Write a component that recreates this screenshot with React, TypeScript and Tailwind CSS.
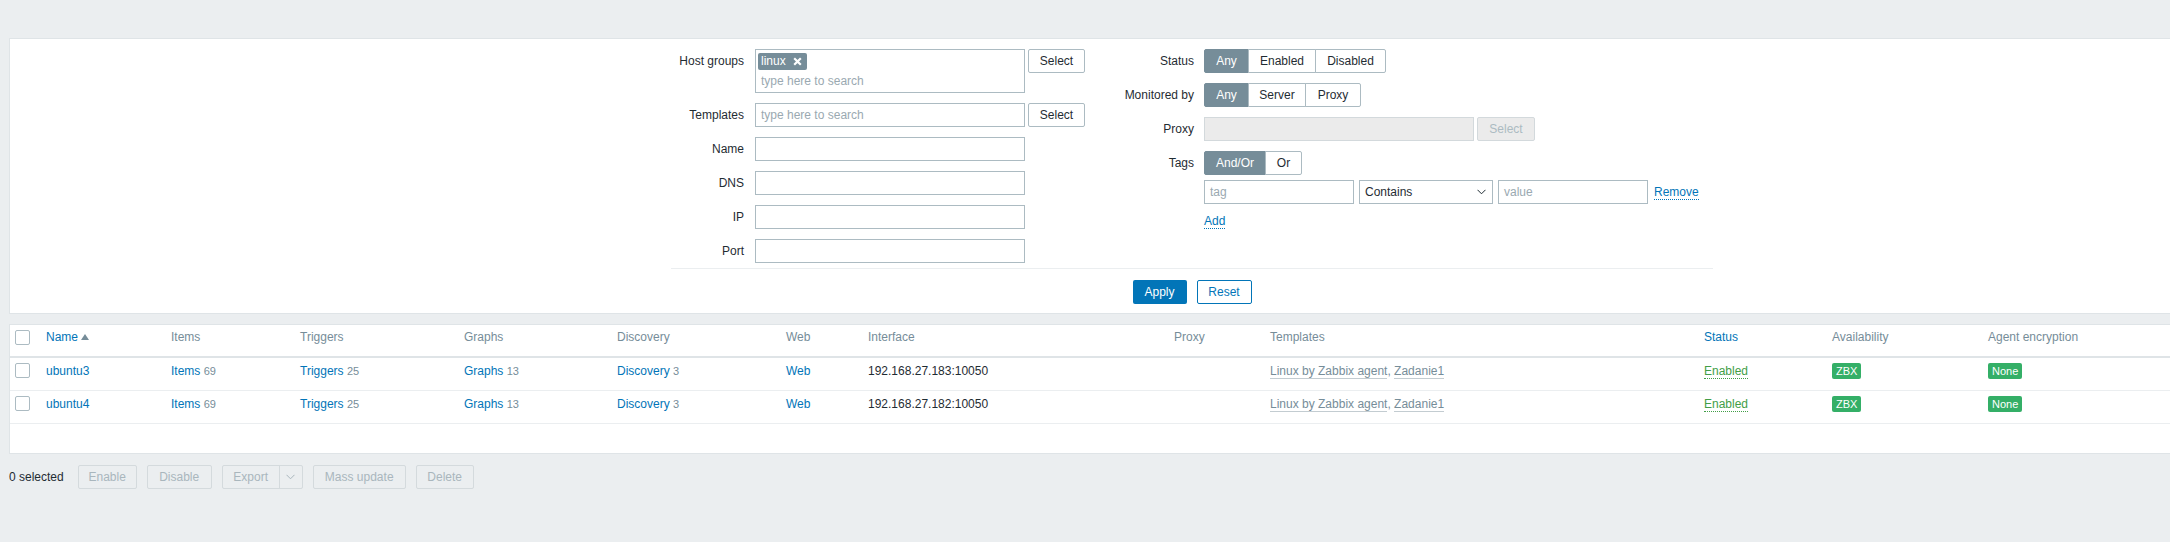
import React from "react";

function Chevron({ className = "" }: { className?: string }) {
  return (
    <svg width="9" height="6" viewBox="0 0 9 6" className={className}>
      <path d="M0.5 0.8 L4.5 4.8 L8.5 0.8" fill="none" stroke="currentColor" strokeWidth="1" />
    </svg>
  );
}

function Input({ placeholder = "", w = "w-[270px]" }: { placeholder?: string; w?: string }) {
  return (
    <div className={`${w} h-[24px] border border-[#acbbc2] bg-white px-[5px] leading-[22px] text-[#9aa9b1]`}>
      {placeholder}
    </div>
  );
}

function SelectBtn() {
  return (
    <div className="w-[57px] h-[24px] border border-[#acbbc2] rounded-[2px] bg-white text-center leading-[22px] text-[#1f2c33]">
      Select
    </div>
  );
}

function Seg({ items }: { items: [string, string][] }) {
  return (
    <div className="flex h-[24px]">
      {items.map(([t, w], i) => (
        <div
          key={t}
          className={`${w} h-[24px] text-center leading-[22px] border ${
            i === 0
              ? "bg-[#768d99] border-[#768d99] text-white rounded-l-[2px]"
              : "bg-white border-[#acbbc2] text-[#1f2c33] -ml-px"
          } ${i === items.length - 1 ? "rounded-r-[2px]" : ""}`}
        >
          {t}
        </div>
      ))}
    </div>
  );
}

const cols =
  "grid grid-cols-[31px_125px_129px_164px_153px_169px_82px_306px_96px_434px_128px_156px_1fr]";

function DataRow({ name, ip }: { name: string; ip: string }) {
  return (
    <div className={`${cols} h-[33px] items-center border-b border-[#ebeef0]`}>
      <div className="pl-[5px]">
        <div className="w-[15px] h-[15px] border border-[#acbbc2] rounded-[2px] bg-white" />
      </div>
      <div className="pl-[5px] text-[#0275b8]">{name}</div>
      <div className="pl-[5px]">
        <span className="text-[#0275b8]">Items</span> <span className="text-[11px] text-[#768d99]">69</span>
      </div>
      <div className="pl-[5px]">
        <span className="text-[#0275b8]">Triggers</span> <span className="text-[11px] text-[#768d99]">25</span>
      </div>
      <div className="pl-[5px]">
        <span className="text-[#0275b8]">Graphs</span> <span className="text-[11px] text-[#768d99]">13</span>
      </div>
      <div className="pl-[5px]">
        <span className="text-[#0275b8]">Discovery</span> <span className="text-[11px] text-[#768d99]">3</span>
      </div>
      <div className="pl-[5px] text-[#0275b8]">Web</div>
      <div className="pl-[5px] text-[#1f2c33]">{ip}</div>
      <div className="pl-[5px]"></div>
      <div className="pl-[5px] text-[#768d99]">
        <span className="border-b border-[#c3ccd1]">Linux by Zabbix agent</span>,{" "}
        <span className="border-b border-[#c3ccd1]">Zadanie1</span>
      </div>
      <div className="pl-[5px]">
        <span className="text-[#429e47] border-b border-dotted border-[#429e47]">Enabled</span>
      </div>
      <div className="pl-[5px]">
        <span className="inline-block h-[16px] px-[4px] leading-[16px] text-[11px] rounded-[2px] bg-[#34af67] text-white">
          ZBX
        </span>
      </div>
      <div className="pl-[5px]">
        <span className="inline-block h-[16px] px-[4px] leading-[16px] text-[11px] rounded-[2px] bg-[#34af67] text-white">
          None
        </span>
      </div>
      <div />
    </div>
  );
}

export default function App() {
  const hdr = "pl-[5px] text-[#768d99]";
  return (
    <div className="min-h-[542px] w-[2170px] overflow-hidden bg-[#ebeef0] pt-[38px] text-[12px] text-[#1f2c33] font-['Liberation_Sans',Arial,sans-serif]">
      {/* Filter panel */}
      <section className="ml-[9px] border border-r-0 border-[#dfe4e7] bg-white">
        <div className="ml-[661px] w-[1042px]">
          <div className="flex border-b border-[#ebeef0] pt-[10px] pb-[5px]">
            {/* left column */}
            <div className="grid grid-cols-[84px_auto] gap-y-[10px] content-start">
              <div className="pr-[11px] text-right leading-[24px]">Host groups</div>
              <div className="flex gap-[3px] items-start">
                <div className="w-[270px] h-[44px] border border-[#acbbc2] bg-white pl-[2px] pt-[2px]">
                  <div className="inline-flex items-center h-[17px] rounded-[2px] bg-[#768d99] text-white pl-[3px] pr-[5px]">
                    <span className="leading-[17px]">linux</span>
                    <svg width="9" height="9" viewBox="0 0 9 9" className="ml-[7px]">
                      <path d="M1.2 1.2 L7.8 7.8 M7.8 1.2 L1.2 7.8" stroke="white" strokeWidth="2.2" />
                    </svg>
                  </div>
                  <div className="pl-[3px] leading-[22px] text-[#9aa9b1]">type here to search</div>
                </div>
                <SelectBtn />
              </div>

              <div className="pr-[11px] text-right leading-[24px]">Templates</div>
              <div className="flex gap-[3px]">
                <Input placeholder="type here to search" />
                <SelectBtn />
              </div>

              <div className="pr-[11px] text-right leading-[24px]">Name</div>
              <Input />
              <div className="pr-[11px] text-right leading-[24px]">DNS</div>
              <Input />
              <div className="pr-[11px] text-right leading-[24px]">IP</div>
              <Input />
              <div className="pr-[11px] text-right leading-[24px]">Port</div>
              <Input />
            </div>

            {/* right column */}
            <div className="grid grid-cols-[119px_auto] gap-y-[10px] content-start">
              <div className="pr-[10px] text-right leading-[24px]">Status</div>
              <Seg items={[["Any", "w-[45px]"], ["Enabled", "w-[68px]"], ["Disabled", "w-[71px]"]]} />

              <div className="pr-[10px] text-right leading-[24px]">Monitored by</div>
              <Seg items={[["Any", "w-[45px]"], ["Server", "w-[58px]"], ["Proxy", "w-[56px]"]]} />

              <div className="pr-[10px] text-right leading-[24px]">Proxy</div>
              <div className="flex gap-[3px]">
                <div className="w-[270px] h-[24px] border border-[#d3d9dc] bg-[#ebebeb]" />
                <div className="w-[58px] h-[24px] border border-[#d3d9dc] rounded-[2px] bg-[#ebebeb] text-center leading-[22px] text-[#acbbc2]">
                  Select
                </div>
              </div>

              <div className="pr-[10px] text-right leading-[24px]">Tags</div>
              <div className="flex flex-col">
                <Seg items={[["And/Or", "w-[62px]"], ["Or", "w-[37px]"]]} />
                <div className="mt-[5px] flex items-center gap-[5px]">
                  <Input placeholder="tag" w="w-[150px]" />
                  <div className="w-[134px] h-[24px] border border-[#acbbc2] bg-white pl-[5px] pr-[6px] flex items-center justify-between text-[#1f2c33]">
                    <span>Contains</span>
                    <Chevron className="text-[#1f2c33]" />
                  </div>
                  <Input placeholder="value" w="w-[150px]" />
                  <span className="ml-[1px] text-[#0275b8] border-b border-dotted border-[#0275b8] leading-[14px]">
                    Remove
                  </span>
                </div>
                <div className="mt-[5px] h-[24px] flex items-center">
                  <span className="text-[#0275b8] border-b border-dotted border-[#0275b8] leading-[14px]">Add</span>
                </div>
              </div>
            </div>
          </div>

          <div className="flex justify-center gap-[10px] pt-[11px] pb-[9px]">
            <div className="w-[54px] h-[24px] rounded-[2px] bg-[#0275b8] text-white text-center leading-[24px]">Apply</div>
            <div className="w-[55px] h-[24px] rounded-[2px] border border-[#0275b8] bg-white text-[#0275b8] text-center leading-[22px]">
              Reset
            </div>
          </div>
        </div>
      </section>

      {/* Table panel */}
      <section className="mt-[10px] ml-[9px] border border-r-0 border-[#dfe4e7] bg-white">
        <div className={`${cols} h-[33px] items-center border-b-2 border-[#dfe4e7]`}>
          <div className="pl-[5px]">
            <div className="w-[15px] h-[15px] border border-[#acbbc2] rounded-[2px] bg-white" />
          </div>
          <div className="pl-[5px] flex items-center text-[#0275b8]">
            Name
            <svg width="8" height="6" viewBox="0 0 8 6" className="ml-[3px]">
              <path d="M0 6 L4 0 L8 6 Z" fill="#768d99" />
            </svg>
          </div>
          <div className={hdr}>Items</div>
          <div className={hdr}>Triggers</div>
          <div className={hdr}>Graphs</div>
          <div className={hdr}>Discovery</div>
          <div className={hdr}>Web</div>
          <div className={hdr}>Interface</div>
          <div className={hdr}>Proxy</div>
          <div className={hdr}>Templates</div>
          <div className="pl-[5px] text-[#0275b8]">Status</div>
          <div className={hdr}>Availability</div>
          <div className={hdr}>Agent encryption</div>
          <div />
        </div>
        <DataRow name="ubuntu3" ip="192.168.27.183:10050" />
        <DataRow name="ubuntu4" ip="192.168.27.182:10050" />
        <div className="h-[29px]" />
      </section>

      {/* Footer actions */}
      <div className="mt-[11px] ml-[9px] flex items-center">
        <span className="text-[#1f2c33] mr-[14px]">0 selected</span>
        <div className="flex gap-[10px]">
          {[
            ["Enable", "w-[59px]"],
            ["Disable", "w-[65px]"],
          ].map(([t, w]) => (
            <div
              key={t}
              className={`${w} h-[24px] border border-[#d4dadd] rounded-[2px] bg-[#ebeef0] text-[#a9b6bd] text-center leading-[22px]`}
            >
              {t}
            </div>
          ))}
          <div className="flex h-[24px] border border-[#d4dadd] rounded-[2px] bg-[#ebeef0] text-[#a9b6bd]">
            <div className="w-[57px] text-center leading-[22px] border-r border-[#d4dadd]">Export</div>
            <div className="w-[22px] flex items-center justify-center">
              <Chevron className="text-[#a9b6bd]" />
            </div>
          </div>
          {[
            ["Mass update", "w-[93px]"],
            ["Delete", "w-[58px]"],
          ].map(([t, w]) => (
            <div
              key={t}
              className={`${w} h-[24px] border border-[#d4dadd] rounded-[2px] bg-[#ebeef0] text-[#a9b6bd] text-center leading-[22px]`}
            >
              {t}
            </div>
          ))}
        </div>
      </div>
    </div>
  );
}
